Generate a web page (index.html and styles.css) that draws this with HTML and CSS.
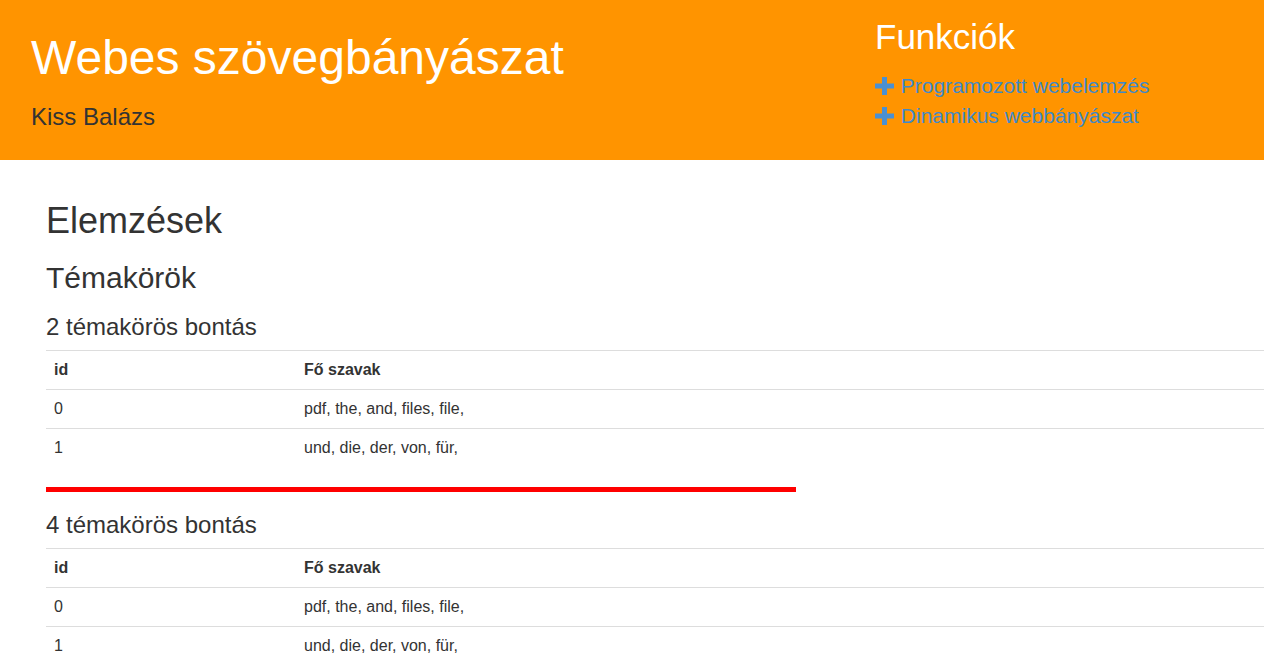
FILE: index.html
```html
<!DOCTYPE html>
<html lang="hu">
<head>
<meta charset="utf-8">
<title>Webes szövegbányászat</title>
<link rel="stylesheet" href="styles.css">
</head>
<body>
<header class="site-header">
  <div class="brand">
    <h1 class="brand-title">Webes szövegbányászat</h1>
    <p class="brand-author">Kiss Balázs</p>
  </div>
  <nav class="features">
    <h2 class="features-title">Funkciók</h2>
    <ul class="features-list">
      <li><a href="#" class="feature-link"><svg class="plus" viewBox="0 0 19 18" aria-hidden="true"><rect x="0" y="6.5" width="19" height="5"/><rect x="7" y="0" width="5" height="18"/></svg> Programozott webelemzés</a></li>
      <li><a href="#" class="feature-link"><svg class="plus" viewBox="0 0 19 18" aria-hidden="true"><rect x="0" y="6.5" width="19" height="5"/><rect x="7" y="0" width="5" height="18"/></svg> Dinamikus webbányászat</a></li>
    </ul>
  </nav>
</header>
<main class="content">
  <h1 class="h-page">Elemzések</h1>
  <h2 class="h-section">Témakörök</h2>

  <h3 class="h-sub">2 témakörös bontás</h3>
  <table class="topics">
    <thead>
      <tr><th class="col-id">id</th><th>Fő szavak</th></tr>
    </thead>
    <tbody>
      <tr><td>0</td><td>pdf, the, and, files, file,</td></tr>
      <tr><td>1</td><td>und, die, der, von, für,</td></tr>
    </tbody>
  </table>
  <hr class="divider">

  <h3 class="h-sub">4 témakörös bontás</h3>
  <table class="topics">
    <thead>
      <tr><th class="col-id">id</th><th>Fő szavak</th></tr>
    </thead>
    <tbody>
      <tr><td>0</td><td>pdf, the, and, files, file,</td></tr>
      <tr><td>1</td><td>und, die, der, von, für,</td></tr>
    </tbody>
  </table>
</main>
</body>
</html>
```

FILE: styles.css
```css
* { box-sizing: border-box; }

body {
  margin: 0;
  font-family: "Liberation Sans", Arial, Helvetica, sans-serif;
  font-size: 16px;
  line-height: 22px;
  color: #333;
  background: #fff;
}

.site-header {
  background: #ff9400;
  height: 160px;
  display: grid;
  grid-template-columns: 844px 1fr;
  padding-left: 31px;
  align-items: start;
}

.brand { padding-top: 31px; }

.brand-title {
  margin: 0;
  font-size: 48px;
  line-height: 53px;
  font-weight: 400;
  color: #fff;
}

.brand-author {
  margin: 20px 0 0;
  font-size: 24px;
  line-height: 26px;
  color: #333;
}

.features { padding-top: 17px; }

.features-title {
  margin: 0;
  font-size: 35px;
  line-height: 39px;
  font-weight: 400;
  color: #fff;
}

.features-list {
  list-style: none;
  margin: 15px 0 0;
  padding: 0;
}

.features-list li {
  font-size: 21px;
  line-height: 30px;
}

.feature-link {
  color: #3f89c8;
  text-decoration: none;
}

.plus {
  width: 19px;
  height: 18px;
  margin-right: 1px;
  fill: #4a90d2;
  vertical-align: -2px;
}

.content {
  padding: 0 0 0 46px;
}

.h-page {
  margin: 41px 0 0;
  font-size: 36px;
  line-height: 40px;
  font-weight: 400;
}

.h-section {
  margin: 20px 0 0;
  font-size: 30px;
  line-height: 33px;
  font-weight: 400;
}

.h-sub {
  margin: 20px 0 10px;
  font-size: 24px;
  line-height: 26px;
  font-weight: 400;
}

.topics {
  width: 100%;
  border-collapse: collapse;
  margin-bottom: 20px;
}

.topics th,
.topics td {
  padding: 8px;
  font-size: 16px;
  line-height: 22px;
  text-align: left;
  border-top: 1px solid #ddd;
  vertical-align: top;
}

.topics th { font-weight: 700; }

.col-id { width: 250px; }

.divider {
  width: 750px;
  height: 5px;
  margin: 0 0 20px;
  border: 0;
  background: #f00;
}
```
